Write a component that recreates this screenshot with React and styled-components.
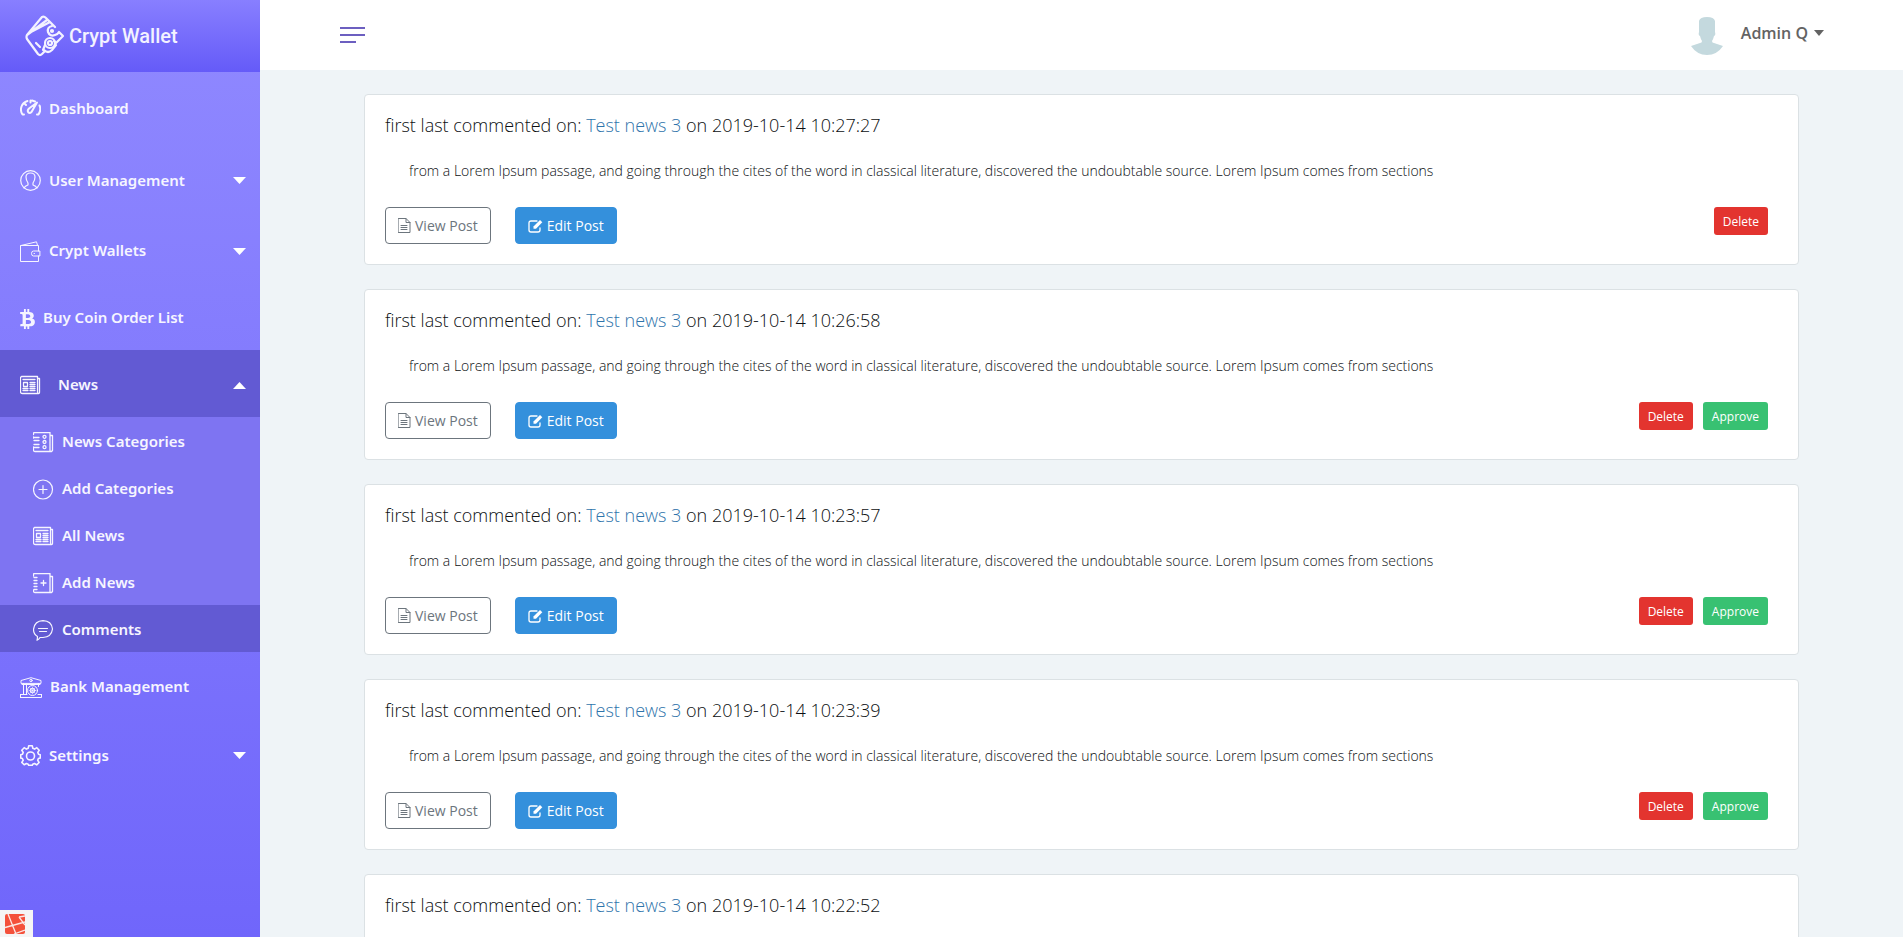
import { useState } from "react";
import styled, { createGlobalStyle } from "styled-components";
import { FaBtc } from "react-icons/fa";

const comments = [
  { id: 1, time: "2019-10-14 10:27:27", approved: true },
  { id: 2, time: "2019-10-14 10:26:58", approved: false },
  { id: 3, time: "2019-10-14 10:23:57", approved: false },
  { id: 4, time: "2019-10-14 10:23:39", approved: false },
  { id: 5, time: "2019-10-14 10:22:52", approved: false },
];
const commentText =
  "from a Lorem Ipsum passage, and going through the cites of the word in classical literature, discovered the undoubtable source. Lorem Ipsum comes from sections";

const App = () => {
  const [newsOpen, setNewsOpen] = useState(true);
  return (
    <>
      <GlobalStyle />
      <Layout>
        <Sidebar>
          <Brand href="#home">
            <WalletLogo />
            Crypt Wallet
          </Brand>
          <nav>
            <MenuItem href="#dashboard" $tall>
              <DashboardIcon />
              Dashboard
            </MenuItem>
            <MenuItem as="button" type="button" $tall>
              <UserIcon />
              User Management
              <MenuCaret />
            </MenuItem>
            <MenuItem as="button" type="button">
              <WalletIcon />
              Crypt Wallets
              <MenuCaret />
            </MenuItem>
            <MenuItem href="#orders" $gap={8}>
              <BtcIcon />
              Buy Coin Order List
            </MenuItem>
            <MenuItem
              as="button"
              type="button"
              aria-expanded={newsOpen}
              onClick={() => setNewsOpen(!newsOpen)}
              $active
              $gap={17}
            >
              <NewsIcon />
              News
              <MenuCaret up={newsOpen} />
            </MenuItem>
            {newsOpen && (
              <SubMenu>
                <SubItem href="#news-categories">
                  <CategoriesIcon />
                  News Categories
                </SubItem>
                <SubItem href="#add-category">
                  <PlusIcon />
                  Add Categories
                </SubItem>
                <SubItem href="#all-news">
                  <NewsIcon />
                  All News
                </SubItem>
                <SubItem href="#add-news">
                  <AddNewsIcon />
                  Add News
                </SubItem>
                <SubItem href="#comments" $active>
                  <CommentIcon />
                  Comments
                </SubItem>
              </SubMenu>
            )}
            <MenuItem href="#bank">
              <BankIcon />
              Bank Management
            </MenuItem>
            <MenuItem as="button" type="button" $tall>
              <GearIcon />
              Settings
              <MenuCaret />
            </MenuItem>
          </nav>
        </Sidebar>
        <Page>
          <TopBar>
            <MenuToggle type="button" aria-label="Toggle menu">
              <span />
              <span />
              <span />
            </MenuToggle>
            <UserButton type="button">
              <Avatar />
              <span>Admin Q</span>
              <Caret width="10" height="6" viewBox="0 0 10 6">
                <path d="M0 0h10L5 6z" />
              </Caret>
            </UserButton>
          </TopBar>
          <Comments>
            {comments.map((comment) => (
              <Card key={comment.id}>
                <CardTitle>
                  first last commented on: <a href="#news-3">Test news 3</a> on{" "}
                  {comment.time}
                </CardTitle>
                <CardText>{commentText}</CardText>
                <CardActions>
                  <PostButton type="button">
                    <FileIcon />
                    View Post
                  </PostButton>
                  <PostButton type="button" $primary>
                    <EditIcon />
                    Edit Post
                  </PostButton>
                  <Moderation>
                    <SmallButton type="button" $color="#e3342f">
                      Delete
                    </SmallButton>
                    {!comment.approved && (
                      <SmallButton type="button" $color="#38c172">
                        Approve
                      </SmallButton>
                    )}
                  </Moderation>
                </CardActions>
              </Card>
            ))}
          </Comments>
        </Page>
      </Layout>
      <DebugButton type="button" aria-label="Open debug bar">
        <svg width="20" height="20" viewBox="0 0 20 20">
          <rect width="20" height="20" rx="2" fill="#f4513b" />
          <path
            d="M0 13.5L20 8M3 0l8 20M14 3l6-1M14 3l6 8M9 20l11-4"
            fill="none"
            stroke="#fbe9e6"
            strokeWidth="1.3"
          />
        </svg>
      </DebugButton>
    </>
  );
};
export default App;

const MenuCaret = ({ up }) => (
  <ItemCaret width="13" height="7" viewBox="0 0 13 7">
    <path d={up ? "M0 7h13L6.5 0z" : "M0 0h13L6.5 7z"} />
  </ItemCaret>
);
const WalletLogo = () => (
  <Icon width="40" height="42" viewBox="0 0 40 42" $stroke={2.2}>
    <path d="M2 20L17 2q2-1 4 1l9 9M2 20q-1 2 0 4l11 15q2 2 4 0l3-3M2 20L22 5M4 18L25 7" />
    <path d="M27 11q-5 1-4 6 2 5 7 3 3-1 4-3l4 4-7 7-2-2" />
    <circle cx="27" cy="16" r="1" />
    <circle cx="25" cy="28" r="5" />
    <circle cx="25" cy="28" r="2" />
    <path d="M19 35q4 4 8 0l4-5M20 30l-2 5M11 28l4 4" />
  </Icon>
);
const DashboardIcon = () => (
  <Icon width="21" height="21" viewBox="0 0 21 21" $stroke={2}>
    <path d="M4 16.500H2.500Q0 13 1.500 8.500 3 4.500 7.500 3M17 16.500h1.500q3-4.500 1-9M5 6l1 1M10.500 2.500v2M12 2.500l3 1" />
    <path d="M17 4.500l-8 6q-2 2-.8 3.700 1.500 1.500 3.300-.2z" />
  </Icon>
);
const UserIcon = () => (
  <Icon width="21" height="21" viewBox="0 0 21 21" $stroke={1.2}>
    <circle cx="10.500" cy="10.500" r="9.800" />
    <path d="M4 18q1-2 4-3v-2q-2-3-2-6 0-4 4.500-4T15 7q0 3-2 6v2q3 1 4 3" />
  </Icon>
);
const WalletIcon = () => (
  <Icon width="21" height="21" viewBox="0 0 21 21">
    <path d="M18.500 10V4.500H.5v16h18V15M1 4.500L16.500 .8l1 3.500M19.500 10h-6q-2 0-2 2.500t2 2.500h6zM14 12.500h.5" />
  </Icon>
);
const NewsIcon = () => (
  <Icon width="21" height="21" viewBox="0 0 21 21" $stroke={1.3}>
    <path d="M1.500 1.500h16v15q0 2 1 2H2.500q-2 0-2-2v-14zM17.500 3.500h2v14q0 1-1 1M3 4.500h12M3.500 7.500h4v4h-4zM10 7.500h5M10 9.500h5M10 11.500h5M3 13.500h5M10 13.500h5M3 15.500h5M10 15.500h5" />
  </Icon>
);
const CategoriesIcon = () => (
  <Icon width="21" height="21" viewBox="0 0 21 21" $stroke={1.3}>
    <path d="M.5 2.500v-1q0-1 1-1h15.500v18q0 1 1 1H2q-1.500 0-1.500-1.500V17M17.500 3.500h2v15l-1 1M1 5.500h5M1 8.500h5M1 12.500h5M1 15.500h5M.5 5v1M.5 15v1" />
    <circle cx="11.500" cy="4.800" r="1.500" />
    <circle cx="11.500" cy="10" r="1.500" />
    <circle cx="11.500" cy="15.200" r="1.500" />
  </Icon>
);
const PlusIcon = () => (
  <Icon width="21" height="21" viewBox="0 0 21 21" $stroke={1.2}>
    <circle cx="10" cy="10.500" r="9.500" />
    <path d="M10 6.500v8M6 10.500h8" />
  </Icon>
);
const AddNewsIcon = () => (
  <Icon width="21" height="21" viewBox="0 0 21 21" $stroke={1.3}>
    <path d="M.5 3V1.500q0-1 1-1h15.500v18q0 1 1 1H2q-1.500 0-1.500-1.500V17M17.500 3.500h2v15l-1 1M1 4.500h3M1 7.500h3M1 10.500h3M1 13.500h3M1 16.500h3M10.500 7.500v5M8 10h5" />
  </Icon>
);
const CommentIcon = () => (
  <Icon width="21" height="21" viewBox="0 0 21 21" $stroke={1.2}>
    <path d="M4.500 16.500q-4-2.500-4-7Q1.500 1 10 .7q8.500.3 9.500 8.300-1 8-9.500 8.500-2 0-3 0-1 2-3 2.800.5-2 .5-3.800zM5.500 8.500h9M6.500 11.500h7" />
  </Icon>
);
const BankIcon = () => (
  <Icon width="22" height="21" viewBox="0 0 22 21">
    <path d="M1 6V3.500L11 .7l10 2.800V6zM3.500 6.500v11M6.500 7v10M2 7.500h18M18.500 6.500v3M.5 17.500h6.500M18 17.500h3.500M.5 20.500h21v-3M.5 17.500v3" />
    <circle cx="11" cy="3.500" r="1.200" />
    <circle cx="12.500" cy="13.500" r="5" />
    <circle cx="12.500" cy="13.500" r="2.300" />
    <path
      d="M12.500 10v7M9 13.500h7M10 11l5 5M10 16l5-5"
      strokeWidth=".6"
    />
  </Icon>
);
const GearIcon = () => (
  <Icon width="21" height="21" viewBox="0 0 21 21" $stroke={1.6}>
    <path d="M8.700.8h3.600l.5 2.500 1.800.8 2.200-1.400 2.400 2.500-1.400 2.200.7 1.800 1.800.5v3.300l-1.900.5-.7 1.800 1.400 2.200-2.400 2.400-2.200-1.400-1.800.8-.5 1.100H8.700l-.5-1.200-1.800-.7-2.200 1.300-2.400-2.400 1.400-2.100-.8-1.800-1.700-.5V9.700l1.800-.5.7-1.800-1.400-2.200 2.400-2.500 2.200 1.400 1.800-.8z" />
    <circle cx="10.500" cy="11" r="4" />
  </Icon>
);
const FileIcon = () => (
  <Icon width="13" height="15" viewBox="0 0 13 15">
    <path d="M.5.5h7.500l4 4v10H.5zM8 .5v4h4M3 7.500h6M3 9.500h6M3 11.500h6" />
  </Icon>
);
const EditIcon = () => (
  <Icon width="15" height="14" viewBox="0 0 15 14" $stroke={1.3}>
    <path d="M9 2H3Q1 2 1 4v7q0 2 2 2h7q2 0 2-2V9" />
    <path
      d="M5.500 7.500L12 1l2.300 2.300L8 9.700H5.500z"
      fill="currentColor"
      stroke="none"
    />
  </Icon>
);
const Avatar = () => (
  <svg width="32" height="38" viewBox="0 0 32 38">
    <path
      d="M8 4Q9 0 16 0t8 4v11q1 3-1 4-1 4-2 5 0 2 2 2l9 3q-6 9-16 9T0 29l9-3q2 0 2-2-1-1-2-5-2-1-1-4z"
      fill="#c4d9de"
    />
  </svg>
);

const GlobalStyle = createGlobalStyle`
  * {
    box-sizing: border-box;
  }
  body {
    margin: 0;
    background: #eff4f7;
    font-family: "Open Sans", sans-serif;
    color: #0c0f12;
  }
  button {
    font: inherit;
    cursor: pointer;
  }
  a {
    text-decoration: none;
  }
`;
const Layout = styled.div`
  display: flex;
  height: 100vh;
`;
const Sidebar = styled.aside`
  flex: 0 0 260px;
  background: linear-gradient(#9089ff, #7066fb);
`;
const Brand = styled.a`
  display: flex;
  align-items: center;
  gap: 4px;
  height: 72px;
  padding: 0 25px;
  background: linear-gradient(#887fff, #655bf8);
  color: #f3f2ff;
  font: 500 20px Roboto, sans-serif;
`;
const Icon = styled.svg`
  flex: none;
  fill: none;
  stroke: currentColor;
  stroke-width: ${({ $stroke }) => $stroke || 1};
  stroke-linecap: round;
  stroke-linejoin: round;
`;
const BtcIcon = styled(FaBtc)`
  width: 15px;
  height: 20px;
`;
const MenuItem = styled.a`
  display: flex;
  align-items: center;
  gap: ${({ $gap }) => $gap || 8}px;
  width: 100%;
  height: ${({ $tall }) => ($tall ? 72 : 67)}px;
  padding: 0 14px 0 20px;
  border: 0;
  background: ${({ $active }) => ($active ? "#625ad3" : "transparent")};
  color: #f6f5ff;
  font: 600 15px "Noto Sans", sans-serif;
  text-align: left;
  svg {
    margin-top: ${({ $tall }) => ($tall ? 1 : 4)}px;
  }
`;
const ItemCaret = styled.svg`
  margin-left: auto;
  fill: #fff;
`;
const SubMenu = styled.div`
  background: #7e74f2;
`;
const SubItem = styled(MenuItem)`
  height: 47px;
  padding-left: 33px;
`;
const Page = styled.div`
  flex: 1;
  min-width: 0;
  overflow-y: auto;
  scrollbar-width: none;
`;
const TopBar = styled.header`
  display: flex;
  align-items: center;
  justify-content: space-between;
  height: 70px;
  padding: 0 79px 0 80px;
  background: #fff;
`;
const MenuToggle = styled.button`
  display: flex;
  flex-direction: column;
  gap: 5px;
  width: 25px;
  padding: 0;
  border: 0;
  background: none;
  span {
    height: 2px;
    background: #6c5fc0;
  }
  span:last-child {
    width: 16px;
  }
`;
const UserButton = styled.button`
  display: flex;
  align-items: center;
  padding: 2px 0 0;
  border: 0;
  background: none;
  color: #636363;
  font-weight: 600;
  font-size: 16px;
  line-height: 34px;
  span {
    margin: 0 6px 6px 18px;
  }
`;
const Caret = styled.svg`
  margin-bottom: 6px;
  fill: #636363;
`;
const Comments = styled.main`
  display: flex;
  flex-direction: column;
  gap: 24px;
  padding: 24px 104px;
`;
const Card = styled.article`
  padding: 20px;
  border: 1px solid #dbe1e4;
  border-radius: 4px;
  background: #fff;
`;
const CardTitle = styled.h4`
  margin: 0 0 24px;
  font-weight: 300;
  font-size: 18px;
  line-height: 20px;
  a {
    color: #2f74ab;
  }
`;
const CardText = styled.p`
  margin: 0 0 24px;
  padding-left: 24px;
  font-weight: 300;
  font-size: 14px;
  line-height: 24px;
`;
const CardActions = styled.div`
  display: flex;
  align-items: flex-start;
  gap: 24px;
`;
const PostButton = styled.button`
  display: flex;
  align-items: center;
  justify-content: center;
  gap: 4px;
  height: 37px;
  padding: 0 12px;
  border: 1px solid ${({ $primary }) => ($primary ? "#3490dc" : "#6c757d")};
  border-radius: 4px;
  background: ${({ $primary }) => ($primary ? "#3490dc" : "#fff")};
  color: ${({ $primary }) => ($primary ? "#fff" : "#6c757d")};
  font-size: 14px;
`;
const Moderation = styled.div`
  display: flex;
  gap: 10px;
  margin: 0 10px 0 auto;
`;
const SmallButton = styled.button`
  height: 28px;
  padding: 0 9px;
  border: 0;
  border-radius: 3px;
  background: ${({ $color }) => $color};
  color: #fff;
  font-size: 12px;
`;
const DebugButton = styled.button`
  position: fixed;
  left: 0;
  bottom: 0;
  display: flex;
  width: 33px;
  height: 27px;
  padding: 4px 5px;
  border: 0;
  background: #f5f5f5;
`;
